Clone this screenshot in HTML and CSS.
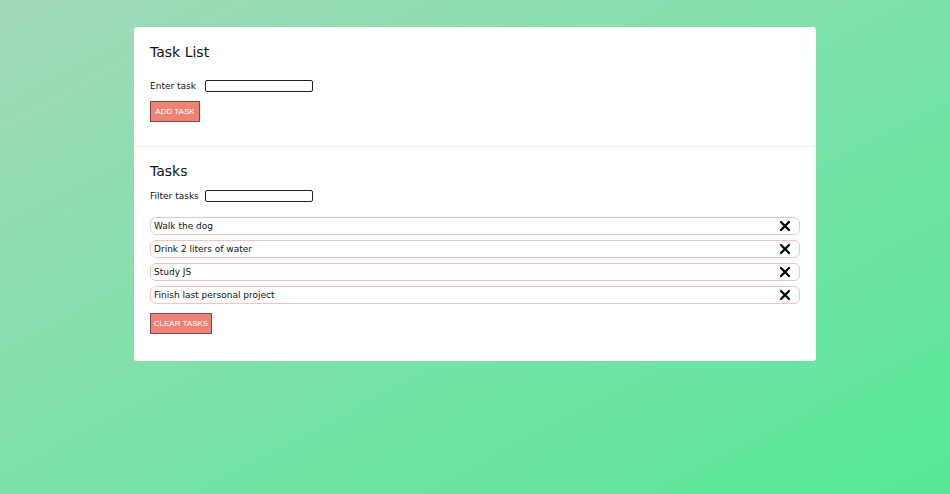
FILE: index.html
```html
<!DOCTYPE html>
<html>
<head>
<meta charset="utf-8">
<link rel="stylesheet" href="styles.css">
</head>
<body>
<div class="page">
  <div class="card">
    <section class="section top">
      <h1 class="title">Task List</h1>
      <div class="field">
        <label class="label">Enter task</label>
        <input class="input" type="text">
      </div>
      <button class="btn add">ADD TASK</button>
    </section>
    <section class="section bottom">
      <h2 class="title">Tasks</h2>
      <div class="field">
        <label class="label">Filter tasks</label>
        <input class="input" type="text">
      </div>
      <ul class="list">
        <li class="item"><span>Walk the dog</span><svg class="del" viewBox="0 0 12 12"><path d="M2 2L10 10M10 2L2 10"/></svg></li>
        <li class="item"><span>Drink 2 liters of water</span><svg class="del" viewBox="0 0 12 12"><path d="M2 2L10 10M10 2L2 10"/></svg></li>
        <li class="item"><span>Study JS</span><svg class="del" viewBox="0 0 12 12"><path d="M2 2L10 10M10 2L2 10"/></svg></li>
        <li class="item"><span>Finish last personal project</span><svg class="del" viewBox="0 0 12 12"><path d="M2 2L10 10M10 2L2 10"/></svg></li>
      </ul>
      <button class="btn clear">CLEAR TASKS</button>
    </section>
  </div>
</div>
</body>
</html>
```
FILE: styles.css
```css
html, body {
  margin: 0;
  padding: 0;
  height: 100%;
}
body {
  background: linear-gradient(to bottom right, #a2d9b9, #57e99a);
  font-family: "DejaVu Sans", Verdana, sans-serif;
  color: #111;
}
.page {
  padding-top: 27px;
  display: flex;
  justify-content: center;
}
.card {
  width: 682px;
  background: #fff;
  border-radius: 3px;
}
.section {
  padding: 16px 16px 0 16px;
}
.top {
  height: 103px;
  border-bottom: 1px solid #eeeeee;
}
.bottom {
  padding-top: 15px;
  padding-bottom: 27px;
}
.title {
  margin: 0;
  font-weight: normal;
  font-size: 14px;
  line-height: 18px;
}
.top .title {
  margin-bottom: 19px;
}
.bottom .title {
  margin-bottom: 10px;
}
.field {
  display: flex;
  align-items: center;
  height: 12px;
}
.label {
  font-size: 9px;
  width: 55px;
}
.input {
  box-sizing: border-box;
  width: 108px;
  height: 12px;
  border: 1px solid #222;
  border-radius: 2px;
  padding: 0;
  margin: 0;
}
.btn {
  display: block;
  background: #ee8275;
  color: #fff;
  border: 1px solid #7a4a45;
  font-family: "Liberation Sans", Arial, sans-serif;
  font-size: 8px;
  padding: 0;
  height: 21px;
}
.add {
  margin-top: 9px;
  width: 50px;
  height: 21px;
}
.list {
  list-style: none;
  margin: 15px 0 0 0;
  padding: 0;
}
.item {
  box-sizing: border-box;
  height: 18px;
  border: 1px solid #f2c4c0;
  border-radius: 6px;
  display: flex;
  align-items: center;
  justify-content: space-between;
  padding: 0 8px 0 3px;
  font-size: 9px;
  margin-bottom: 5px;
}
.del {
  width: 12px;
  height: 12px;
  stroke: #000;
  stroke-width: 2.3;
  stroke-linecap: round;
  fill: none;
}
.clear {
  margin-top: 9px;
  width: 62px;
}
```
